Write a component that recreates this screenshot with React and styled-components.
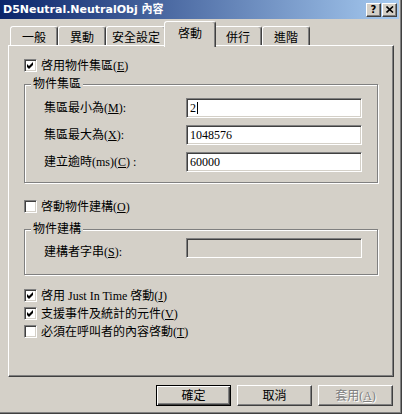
import React from "react";
import styled, { createGlobalStyle } from "styled-components";

const Global = createGlobalStyle`
  html, body { margin: 0; padding: 0; background: #D4D0C8; }
  body { font-family: "Liberation Serif", "Noto Sans CJK TC", serif; font-size: 12px; color: #000; }
  * { box-sizing: border-box; }
`;

const Window = styled.div`
  width: 402px;
  height: 414px;
  background: #D4D0C8;
  border-right: 1px solid #404040;
  border-bottom: 1px solid #404040;
  box-shadow: inset -1px -1px 0 #808080;
  display: flex;
  flex-direction: column;
  overflow: hidden;
`;

const TitleBar = styled.div`
  height: 19px;
  margin-right: 2px;
  background: linear-gradient(to right, #0A246A, #A6CAF0);
  display: flex;
  align-items: center;
  justify-content: space-between;
  padding: 0 2px 0 3px;
`;

const TitleText = styled.div`
  font-family: "DejaVu Sans", "Noto Sans CJK TC", sans-serif;
  font-weight: bold;
  font-size: 11px;
  color: #fff;
  line-height: 19px;
  white-space: nowrap;
`;

const CaptionButtons = styled.div`
  display: flex;
  gap: 1px;
`;

const CaptionButton = styled.div`
  width: 15px;
  height: 14px;
  background: #D4D0C8;
  border: 1px solid;
  border-color: #fff #404040 #404040 #fff;
  box-shadow: inset -1px -1px 0 #808080;
  display: flex;
  align-items: center;
  justify-content: center;
  font-family: "DejaVu Sans", sans-serif;
  font-weight: bold;
  font-size: 10px;
  line-height: 10px;
  color: #000;
`;

const Body = styled.div`
  flex: 1;
  display: flex;
  flex-direction: column;
  padding: 2px 7px 0 8px;
`;

const TabRow = styled.div`
  height: 24px;
  display: flex;
  align-items: flex-end;
  padding-left: 2px;
`;

const Tab = styled.div`
  position: relative;
  z-index: ${(p) => (p.$active ? 2 : 1)};
  width: ${(p) => p.$w + (p.$active ? 4 : 0)}px;
  height: ${(p) => (p.$active ? 26 : 19)}px;
  margin: ${(p) => (p.$active ? "0 -2px -2px -2px" : "0")};
  padding-top: ${(p) => (p.$active ? 0 : 4)}px;
  background: #D4D0C8;
  border: 1px solid;
  border-bottom: none;
  border-color: #fff #404040 transparent #fff;
  border-radius: 3px 3px 0 0;
  box-shadow: inset -1px 0 0 #808080;
  display: flex;
  align-items: center;
  justify-content: center;
  line-height: 15px;
  white-space: nowrap;
`;

const Panel = styled.div`
  position: relative;
  z-index: 1;
  height: 332px;
  border: 1px solid;
  border-color: #fff #404040 #404040 #fff;
  box-shadow: inset -1px -1px 0 #808080;
  padding: 13px 15px 0 15px;
  display: flex;
  flex-direction: column;
`;

const CheckRow = styled.label`
  display: flex;
  align-items: center;
  gap: 4px;
  height: 13px;
  margin-top: ${(p) => p.$mt || 0}px;
  line-height: 14px;
  white-space: nowrap;
`;

const Box = styled.span`
  width: 13px;
  height: 13px;
  flex: none;
  background: #fff;
  border: 1px solid;
  border-color: #808080 #fff #fff #808080;
  box-shadow: inset 1px 1px 0 #404040, inset -1px -1px 0 #D4D0C8;
  display: flex;
  align-items: center;
  justify-content: center;
`;

const Group = styled.div`
  margin-top: ${(p) => p.$mt}px;
  border: 1px solid #808080;
  box-shadow: inset 1px 1px 0 #fff, 1px 1px 0 #fff;
  padding: 0 ${(p) => p.$pr || 15}px ${(p) => p.$pb}px 19px;
  display: flex;
  flex-direction: column;
`;

const Legend = styled.div`
  margin: -7px 0 0 -13px;
  align-self: flex-start;
  padding: 0 2px;
  background: #D4D0C8;
  line-height: 12px;
  height: 12px;
  white-space: nowrap;
`;

const Fields = styled.div`
  margin-top: ${(p) => p.$mt}px;
  display: flex;
  flex-direction: column;
  gap: 7px;
`;

const FieldRow = styled.div`
  display: flex;
  align-items: center;
`;

const FieldLabel = styled.div`
  width: 142px;
  padding-top: ${(p) => p.$drop || 0}px;
  line-height: 14px;
  white-space: nowrap;
`;

const Input = styled.div`
  width: 176px;
  height: 20px;
  background: ${(p) => (p.$disabled ? "#D4D0C8" : "#fff")};
  border: 1px solid;
  border-color: #808080 #fff #fff #808080;
  box-shadow: inset 1px 1px 0 #404040, inset -1px -1px 0 #D4D0C8;
  padding: 0 3px;
  display: flex;
  align-items: center;
  line-height: 14px;
`;

const Caret = styled.span`
  display: inline-block;
  width: 1px;
  height: 12px;
  background: #000;
  margin-left: 1px;
`;

const ButtonRow = styled.div`
  margin-top: 8px;
  margin-right: 1px;
  display: flex;
  justify-content: flex-end;
  gap: 6px;
`;

const Button = styled.div`
  width: 75px;
  height: 21px;
  background: #D4D0C8;
  border: 1px solid;
  border-color: ${(p) => (p.$default ? "#000" : "#fff #404040 #404040 #fff")};
  box-shadow: ${(p) =>
    p.$default
      ? "inset 1px 1px 0 #fff, inset -1px -1px 0 #404040, inset -2px -2px 0 #808080"
      : "inset -1px -1px 0 #808080"};
  display: flex;
  align-items: center;
  justify-content: center;
  line-height: 14px;
  color: ${(p) => (p.$disabled ? "#808080" : "#000")};
  text-shadow: ${(p) => (p.$disabled ? "1px 1px 0 #fff" : "none")};
`;

const Check = () => (
  <svg width="7" height="7" viewBox="0 0 7 7">
    <path d="M0 2 L2 4 L6 0 L6 3 L2 7 L0 5 Z" fill="#000" />
  </svg>
);

const CheckBox = ({ checked, children, mt }) => (
  <CheckRow $mt={mt}>
    <Box>{checked && <Check />}</Box>
    <span>{children}</span>
  </CheckRow>
);

const tabs = [
  { label: "一般", w: 48 },
  { label: "異動", w: 48 },
  { label: "安全設定", w: 60 },
  { label: "啓動", w: 48, active: true },
  { label: "併行", w: 48 },
  { label: "進階", w: 48 },
];

export default function App() {
  return (
    <>
      <Global />
      <Window>
        <TitleBar>
          <TitleText>D5Neutral.NeutralObj 內容</TitleText>
          <CaptionButtons>
            <CaptionButton>?</CaptionButton>
            <CaptionButton>
              <svg width="8" height="7" viewBox="0 0 8 7">
                <path d="M0.5 0.5 L7 6.5 M7 0.5 L0.5 6.5" stroke="#000" strokeWidth="1.6" />
              </svg>
            </CaptionButton>
          </CaptionButtons>
        </TitleBar>
        <Body>
          <TabRow>
            {tabs.map((t) => (
              <Tab key={t.label} $w={t.w} $active={t.active}>
                {t.label}
              </Tab>
            ))}
          </TabRow>
          <Panel>
            <CheckBox checked>
              啓用物件集區(<u>E</u>)
            </CheckBox>
            <Group $mt={12} $pb={10}>
              <Legend>物件集區</Legend>
              <Fields $mt={8}>
                <FieldRow>
                  <FieldLabel>集區最小為(<u>M</u>):</FieldLabel>
                  <Input>
                    2<Caret />
                  </Input>
                </FieldRow>
                <FieldRow>
                  <FieldLabel>集區最大為(<u>X</u>):</FieldLabel>
                  <Input>1048576</Input>
                </FieldRow>
                <FieldRow>
                  <FieldLabel>建立逾時(ms)(<u>C</u>) :</FieldLabel>
                  <Input>60000</Input>
                </FieldRow>
              </Fields>
            </Group>
            <CheckBox mt={17}>
              啓動物件建構(<u>O</u>)
            </CheckBox>
            <Group $mt={16} $pb={15} $pr={14}>
              <Legend>物件建構</Legend>
              <Fields $mt={2}>
                <FieldRow>
                  <FieldLabel $drop={8}>建構者字串(<u>S</u>):</FieldLabel>
                  <Input $disabled />
                </FieldRow>
              </Fields>
            </Group>
            <CheckBox checked mt={14}>
              啓用 Just In Time 啓動(<u>J</u>)
            </CheckBox>
            <CheckBox checked mt={5}>
              支援事件及統計的元件(<u>V</u>)
            </CheckBox>
            <CheckBox mt={5}>
              必須在呼叫者的內容啓動(<u>T</u>)
            </CheckBox>
          </Panel>
          <ButtonRow>
            <Button $default>確定</Button>
            <Button>取消</Button>
            <Button $disabled>
              套用(<u>A</u>)
            </Button>
          </ButtonRow>
        </Body>
      </Window>
    </>
  );
}
